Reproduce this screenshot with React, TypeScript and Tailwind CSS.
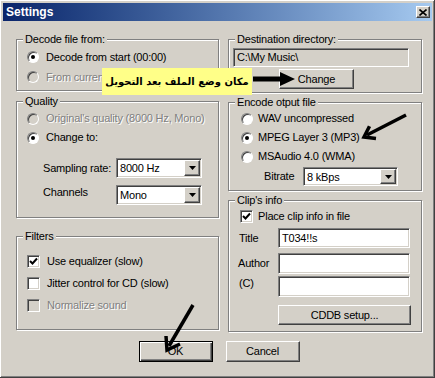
import type { ReactNode } from "react";

const sunken =
  "border border-t-[#808080] border-l-[#808080] border-b-white border-r-white shadow-[inset_1px_1px_0_#404040,inset_-1px_-1px_0_#d4d0c8]";
const raised =
  "border border-t-white border-l-white border-b-[#404040] border-r-[#404040] shadow-[inset_-1px_-1px_0_#808080]";

function Group({ label, className, children }: { label: string; className: string; children: ReactNode }) {
  return (
    <fieldset className={`border border-[#808080] shadow-[inset_1px_1px_0_#fff,1px_1px_0_#fff] ${className}`}>
      <legend className="ml-[6px] px-[2px] leading-[13px] bg-[#d4d0c8]">{label}</legend>
      {children}
    </fieldset>
  );
}

function Radio({ checked, disabled }: { checked?: boolean; disabled?: boolean }) {
  return (
    <span
      className={`flex h-[12px] w-[12px] shrink-0 items-center justify-center rounded-full border border-t-[#808080] border-l-[#808080] border-b-white border-r-white shadow-[inset_1px_1px_0_#404040] ${
        disabled ? "bg-[#d4d0c8]" : "bg-white"
      }`}
    >
      {checked && <span className="h-[4px] w-[4px] rounded-full bg-black" />}
    </span>
  );
}

function Check({ checked, disabled }: { checked?: boolean; disabled?: boolean }) {
  return (
    <span
      className={`flex h-[13px] w-[13px] shrink-0 items-center justify-center ${sunken} ${
        disabled ? "bg-[#d4d0c8]" : "bg-white"
      }`}
    >
      {checked && (
        <svg width="9" height="9" viewBox="0 0 9 9">
          <path d="M1 4 L3.5 6.5 L8 1.5" stroke="#000" strokeWidth="2" fill="none" />
        </svg>
      )}
    </span>
  );
}

function Combo({ value, className }: { value: string; className: string }) {
  return (
    <div className={`flex bg-white ${sunken} ${className}`}>
      <span className="flex-1 pl-[3px] pt-[1px] leading-[16px]">{value}</span>
      <span className={`m-[1px] flex w-[16px] items-center justify-center bg-[#d4d0c8] ${raised}`}>
        <svg width="7" height="4" viewBox="0 0 7 4">
          <path d="M0 0 H7 L3.5 4 Z" fill="#000" />
        </svg>
      </span>
    </div>
  );
}

const disabledText = "text-[#808080] [text-shadow:1px_1px_0_#fff]";

export default function App() {
  return (
    <div className="relative h-[378px] w-[435px] overflow-hidden whitespace-nowrap bg-[#d4d0c8] pl-[3px] pr-[2px] pt-[3px] border-r border-b border-[#404040] shadow-[inset_1px_1px_0_#fff,inset_-1px_-1px_0_#808080] font-['Liberation_Sans',sans-serif] text-[11px] tracking-[-0.2px] text-black">
      <div className="flex h-[18px] items-center justify-between bg-linear-to-r from-[#0a246a] to-[#a6caf0] pl-[3px] pr-[2px]">
        <span className="text-[12px] font-bold tracking-normal text-white">Settings</span>
        <span className={`flex h-[12px] w-[14px] items-center justify-center bg-[#d4d0c8] ${raised}`}>
          <svg width="8" height="7" viewBox="0 0 8 7">
            <path d="M0.5 0.5 L7.5 6.5 M7.5 0.5 L0.5 6.5" stroke="#000" strokeWidth="1.6" />
          </svg>
        </span>
      </div>

      <div className="flex gap-[9px] pl-[13px] pt-[12px]">
        <div className="flex w-[203px] flex-col">
          <Group label="Decode file from:" className="h-[58px]">
            <div className="pt-[1px] pl-[10px]">
              <div className="flex h-[20px] items-center gap-[7px]">
                <Radio checked />
                <span>Decode from start (00:00)</span>
              </div>
              <div className="flex h-[20px] items-center gap-[7px]">
                <Radio disabled />
                <span className={disabledText}>From curren</span>
              </div>
            </div>
          </Group>

          <Group label="Quality" className="mt-[4px] h-[123px]">
            <div className="pt-[1px] pl-[10px]">
              <div className="flex h-[19px] items-center gap-[7px]">
                <Radio disabled />
                <span className={disabledText}>Original's quality (8000 Hz, Mono)</span>
              </div>
              <div className="flex h-[19px] items-center gap-[7px]">
                <Radio checked />
                <span>Change to:</span>
              </div>
            </div>
            <div className="mt-[11px] flex items-center pl-[26px]">
              <span className="w-[73px]">Sampling rate:</span>
              <Combo value="8000 Hz" className="h-[20px] w-[86px]" />
            </div>
            <div className="mt-[7px] flex items-center pl-[26px]">
              <span className="w-[73px] -mt-[6px]">Channels</span>
              <Combo value="Mono" className="h-[20px] w-[86px]" />
            </div>
          </Group>

          <Group label="Filters" className="mt-[12px] h-[100px]">
            <div className="pt-[7px] pl-[10px]">
              <div className="flex h-[22px] items-center gap-[7px]">
                <Check checked />
                <span>Use equalizer (slow)</span>
              </div>
              <div className="flex h-[22px] items-center gap-[7px]">
                <Check />
                <span>Jitter control for CD (slow)</span>
              </div>
              <div className="flex h-[22px] items-center gap-[7px]">
                <Check disabled />
                <span className={disabledText}>Normalize sound</span>
              </div>
            </div>
          </Group>
        </div>

        <div className="flex w-[194px] flex-col">
          <Group label="Destination directory:" className="h-[60px]">
            <div className={`ml-[4px] mt-[2px] h-[19px] w-[176px] bg-[#d4d0c8] pl-[3px] leading-[17px] ${sunken}`}>
              C:\My Music\
            </div>
            <button className={`ml-[50px] mt-[2px] h-[20px] w-[75px] bg-[#d4d0c8] ${raised}`}>Change</button>
          </Group>

          <Group label="Encode otput file" className="mt-[3px] h-[95px]">
            <div className="pl-[12px]">
              <div className="flex h-[19px] items-center gap-[5px]">
                <Radio />
                <span>WAV uncompressed</span>
              </div>
              <div className="flex h-[19px] items-center gap-[5px]">
                <Radio checked />
                <span>MPEG Layer 3 (MP3)</span>
              </div>
              <div className="flex h-[19px] items-center gap-[5px]">
                <Radio />
                <span>MSAudio 4.0 (WMA)</span>
              </div>
            </div>
            <div className="mt-[1px] flex items-center pl-[35px]">
              <span className="w-[39px]">Bitrate</span>
              <Combo value="8 kBps" className="h-[19px] w-[95px]" />
            </div>
          </Group>

          <Group label="Clip's info" className="mt-[3px] h-[138px]">
            <div className="flex h-[18px] items-center gap-[5px] pl-[11px]">
              <Check checked />
              <span>Place clip info in file</span>
            </div>
            <div className="mt-[3px] flex items-center pl-[10px]">
              <span className="w-[39px]">Title</span>
              <div className={`h-[20px] w-[132px] bg-white pl-[3px] leading-[18px] ${sunken}`}>T034!!s</div>
            </div>
            <div className="mt-[5px] flex items-center pl-[9px]">
              <span className="w-[40px]">Author</span>
              <div className={`h-[21px] w-[132px] bg-white ${sunken}`} />
            </div>
            <div className="mt-[2px] flex items-center pl-[10px]">
              <span className="w-[39px] -mt-[6px]">(C)</span>
              <div className={`h-[21px] w-[132px] bg-white ${sunken}`} />
            </div>
            <button className={`ml-[49px] mt-[8px] h-[20px] w-[133px] bg-[#d4d0c8] ${raised}`}>CDDB setup...</button>
          </Group>
        </div>
      </div>

      <div className="mt-[9px] flex justify-center gap-[13px] pl-[3px]">
        <button className="h-[21px] w-[74px] border border-black bg-[#d4d0c8] shadow-[inset_1px_1px_0_#fff,inset_-1px_-1px_0_#404040,inset_-2px_-2px_0_#808080]">
          OK
        </button>
        <button className={`h-[21px] w-[74px] bg-[#d4d0c8] ${raised}`}>Cancel</button>
      </div>

      <div
        dir="rtl"
        className="absolute left-[102px] top-[68px] flex h-[27px] w-[150px] items-center justify-center bg-[#ffff88] font-['DejaVu_Sans',sans-serif] text-[10px] font-bold tracking-normal"
      >
        مكان وضع الملف بعد التحويل
      </div>

      <svg className="pointer-events-none absolute left-0 top-0" width="435" height="378" viewBox="0 0 435 378">
        <path d="M253 79 H283" stroke="#000" strokeWidth="5" />
        <path d="M280 72 L295 79 L280 86 Z" fill="#000" />
        <path d="M406 115 L367 135" stroke="#000" strokeWidth="3.5" />
        <path d="M376 138.5 L364 137 L369.5 126.3" stroke="#000" strokeWidth="3.5" fill="none" strokeLinejoin="miter" />
        <path d="M193 305 L169 346" stroke="#000" strokeWidth="3.5" />
        <path d="M180 344 L167 350 L166 336" stroke="#000" strokeWidth="3.5" fill="none" strokeLinejoin="miter" />
      </svg>
    </div>
  );
}
